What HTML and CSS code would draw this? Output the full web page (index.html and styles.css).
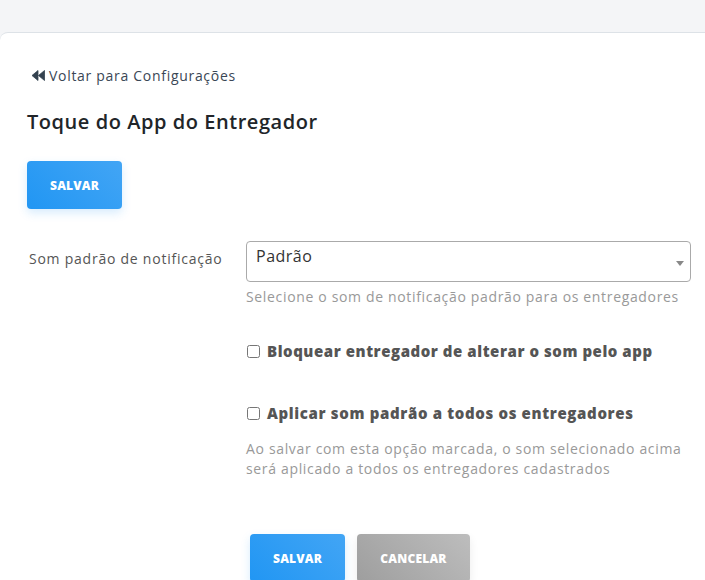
FILE: index.html
```html
<!DOCTYPE html>
<html lang="pt-BR">
<head>
<meta charset="utf-8">
<title>Toque do App do Entregador</title>
<link rel="stylesheet" href="styles.css">
</head>
<body>
<div class="topbar"></div>
<main class="card">
  <a class="back" href="#">
    <svg class="back-icon" width="14" height="11" viewBox="0 0 14 11" aria-hidden="true">
      <path d="M7 0.5 V10.5 L1 5.5 Z M13.5 0.5 V10.5 L7.5 5.5 Z" fill="#34424f" stroke="#34424f" stroke-width="0.8" stroke-linejoin="round"/>
    </svg>
    <span>Voltar para Configurações</span>
  </a>
  <h1 class="title">Toque do App do Entregador</h1>
  <button class="btn btn-primary" type="button">SALVAR</button>

  <div class="form">
    <div class="form-row">
      <label class="form-label">Som padrão de notificação</label>
      <div class="form-field">
        <div class="select">
          <span class="select-value">Padrão</span>
          <span class="select-arrow"></span>
        </div>
        <p class="help">Selecione o som de notificação padrão para os entregadores</p>
      </div>
    </div>

    <div class="form-row">
      <div></div>
      <div class="form-field">
        <label class="check check-first"><input type="checkbox"><span>Bloquear entregador de alterar o som pelo app</span></label>
      </div>
    </div>

    <div class="form-row">
      <div></div>
      <div class="form-field">
        <label class="check check-second"><input type="checkbox"><span>Aplicar som padrão a todos os entregadores</span></label>
        <p class="help help-multi">Ao salvar com esta opção marcada, o som selecionado acima será aplicado a todos os entregadores cadastrados</p>
      </div>
    </div>

    <div class="form-row">
      <div></div>
      <div class="actions">
        <button class="btn btn-primary" type="button">SALVAR</button>
        <button class="btn btn-secondary" type="button">CANCELAR</button>
      </div>
    </div>
  </div>
</main>
</body>
</html>
```

FILE: styles.css
```css
html, body {
  margin: 0;
  padding: 0;
}
body {
  background: #f4f5f7;
  font-family: "Open Sans", "Noto Sans", sans-serif;
  color: #212529;
  overflow: hidden;
  height: 580px;
}
.topbar {
  height: 32px;
}
.card {
  background: #fff;
  border-top: 1px solid #dde2e7;
  border-top-left-radius: 8px;
  padding: 32px 0 0 27px;
  height: 548px;
  box-sizing: border-box;
  overflow: hidden;
}
.back {
  display: flex;
  align-items: center;
  gap: 4px;
  height: 20px;
  padding-left: 4px;
  color: #3a4755;
  text-decoration: none;
  font-size: 14px;
  font-weight: 500;
  letter-spacing: 0.7px;
}
.back-icon {
  display: block;
}
.title {
  margin: 23px 0 0;
  font-size: 20px;
  line-height: 28px;
  font-weight: 600;
  letter-spacing: 0.55px;
  color: #212529;
}
.btn {
  border: none;
  border-radius: 4px;
  height: 48px;
  color: #fff;
  font-family: inherit;
  font-weight: 800;
  font-size: 12px;
  letter-spacing: 0.2px;
  cursor: pointer;
}
.btn-primary {
  background: linear-gradient(45deg, #2196f3, #42a5f5);
  box-shadow: 0 4px 10px rgba(33, 150, 243, 0.18);
  width: 95px;
}
.btn-secondary {
  background: linear-gradient(45deg, #9e9e9e, #bdbdbd);
  box-shadow: 0 4px 10px rgba(0, 0, 0, 0.08);
  width: 113px;
}
.title + .btn {
  margin-top: 25px;
}
.form {
  margin-top: 32px;
  display: flex;
  flex-direction: column;
}
.form-row {
  display: grid;
  grid-template-columns: 219px 445px;
}
.form-label {
  font-size: 14px;
  color: #555;
  padding: 8px 0 0 2px;
  line-height: 20px;
  letter-spacing: 0.76px;
  white-space: nowrap;
}
.select {
  position: relative;
  height: 41px;
  box-sizing: border-box;
  border: 1px solid #aaa;
  border-radius: 4px;
  padding: 2px 9px;
  font-size: 16px;
  line-height: 24px;
  letter-spacing: 0.5px;
  color: #333;
}
.select-arrow {
  position: absolute;
  right: 6px;
  top: 19px;
  width: 0;
  height: 0;
  border-style: solid;
  border-width: 5px 4px 0 4px;
  border-color: #888 transparent transparent transparent;
}
.help {
  margin: 5px 0 0;
  font-size: 14px;
  line-height: 20px;
  letter-spacing: 0.66px;
  color: #999;
}
.check {
  display: flex;
  align-items: center;
  gap: 7px;
  font-size: 15px;
  line-height: 22px;
  font-weight: 800;
  letter-spacing: 0.55px;
  color: #555;
}
.check-second {
  letter-spacing: 0.65px;
}
.check input {
  margin: 0 0 0 1px;
  width: 13px;
  height: 13px;
}
.check-first {
  margin-top: 33px;
}
.check-second {
  margin-top: 40px;
}
.help-multi {
  margin-top: 15px;
  line-height: 19.5px;
}
.actions {
  display: flex;
  gap: 12px;
  margin-top: 56px;
  padding-left: 4px;
}
```
